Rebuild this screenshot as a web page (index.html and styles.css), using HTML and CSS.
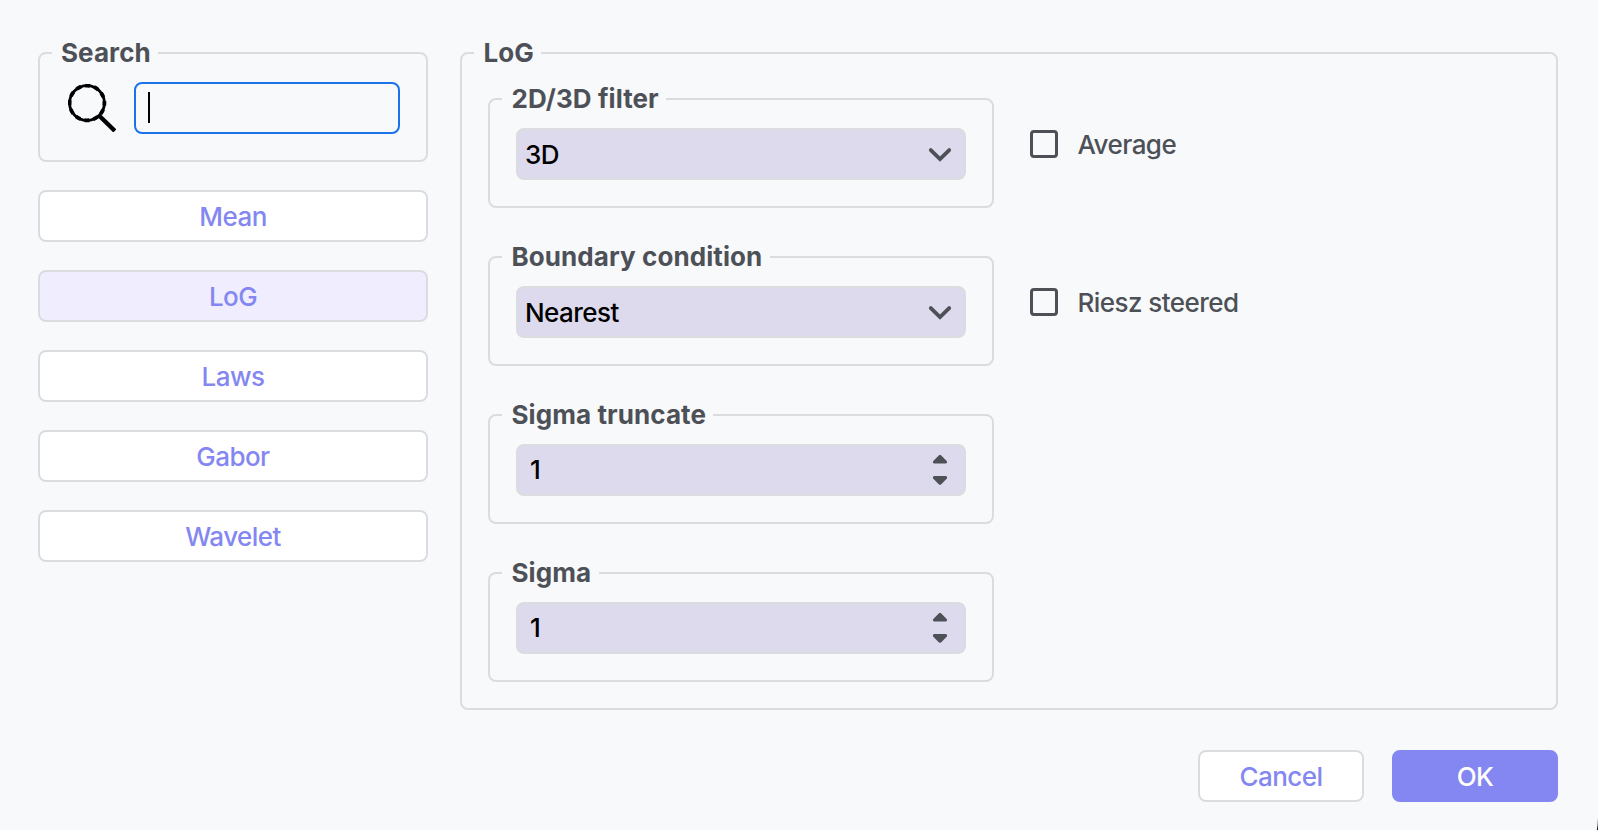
FILE: index.html
```html
<!DOCTYPE html>
<html lang="en">
<head>
<meta charset="utf-8">
<title>Filter settings</title>
<link rel="stylesheet" href="styles.css">
</head>
<body>
<div class="dialog">
  <div class="content">
    <aside class="sidebar">
      <fieldset class="group group-search">
        <legend class="legend">Search</legend>
        <div class="search-row">
          <svg class="search-icon" width="48" height="48" viewBox="0 0 48 48" fill="none" stroke="#000">
            <circle cx="19" cy="19" r="17.4" stroke-width="2.8"/>
            <circle cx="19" cy="19" r="17.4" stroke-width="3.8" stroke-dasharray="5 4.11" stroke-dashoffset="2.5"/>
            <path d="M31.5 32 46.8 46.900" stroke-width="4.3"/>
          </svg>
          <div class="search-input"><span class="caret"></span></div>
        </div>
      </fieldset>
      <button class="btn">Mean</button>
      <button class="btn btn-selected">LoG</button>
      <button class="btn">Laws</button>
      <button class="btn">Gabor</button>
      <button class="btn">Wavelet</button>
    </aside>
    <fieldset class="group panel">
      <legend class="legend">LoG</legend>
      <div class="options">
        <fieldset class="group">
          <legend class="legend">2D/3D filter</legend>
          <div class="field"><span>3D</span>
            <svg class="chevron" width="24" height="16" viewBox="0 0 24 16"><path d="M2.8 3.1 12 12.2 21.2 3.1" fill="none" stroke="#4d5157" stroke-width="3.8" stroke-linecap="round"/></svg>
          </div>
        </fieldset>
        <label class="check"><span class="box"></span>Average</label>
        <fieldset class="group">
          <legend class="legend">Boundary condition</legend>
          <div class="field"><span>Nearest</span>
            <svg class="chevron" width="24" height="16" viewBox="0 0 24 16"><path d="M2.8 3.1 12 12.2 21.2 3.1" fill="none" stroke="#4d5157" stroke-width="3.8" stroke-linecap="round"/></svg>
          </div>
        </fieldset>
        <label class="check"><span class="box"></span>Riesz steered</label>
        <fieldset class="group group-row">
          <legend class="legend">Sigma truncate</legend>
          <div class="field field-number"><span>1</span>
            <svg class="spinner" width="16" height="32" viewBox="0 0 16 32" fill="#4d5157"><path d="M7 1.2q1-.9 2 0l5.7 5.7q.6.8.3 1.7-.4 1-1.4 1H2.400q-1 0-1.400-1-.3-.9.3-1.700z"/><path d="M7 30.400q1 .9 2 0l5.700-5.700q.6-.8.3-1.700-.4-1-1.400-1H2.400q-1 0-1.400 1-.3.9.3 1.700z"/></svg>
          </div>
        </fieldset>
        <fieldset class="group group-row">
          <legend class="legend">Sigma</legend>
          <div class="field field-number"><span>1</span>
            <svg class="spinner" width="16" height="32" viewBox="0 0 16 32" fill="#4d5157"><path d="M7 1.2q1-.9 2 0l5.7 5.7q.6.8.3 1.7-.4 1-1.4 1H2.400q-1 0-1.400-1-.3-.9.3-1.700z"/><path d="M7 30.400q1 .9 2 0l5.700-5.700q.6-.8.3-1.700-.4-1-1.400-1H2.400q-1 0-1.400 1-.3.9.3 1.700z"/></svg>
          </div>
        </fieldset>
      </div>
    </fieldset>
  </div>
  <footer class="actions">
    <button class="btn btn-action">Cancel</button>
    <button class="btn btn-action btn-primary">OK</button>
  </footer>
  <svg class="corner" width="2" height="12" viewBox="0 0 2 12"><path d="M2 0V12H.8Q1.800 7 2 0z" fill="#16181b"/></svg>
</div>
</body>
</html>
```
FILE: styles.css
```css
* { box-sizing: border-box; }

body {
  margin: 0;
  background: #f8f9fb;
  color: #4d5157;
  font: 450 26px/32px Inter, "Liberation Sans", sans-serif;
  letter-spacing: -0.55px;
}

.dialog {
  position: relative;
  width: 1598px;
  height: 830px;
  padding: 37px 40px 28px 38px;
  display: flex;
  flex-direction: column;
  justify-content: space-between;
  overflow: hidden;
}

.content {
  display: flex;
  align-items: flex-start;
  gap: 32px;
}

.sidebar {
  width: 390px;
  display: flex;
  flex-direction: column;
  gap: 28px;
}

.group {
  margin: 0;
  min-width: 0;
  padding: 13px 26px 26px;
  border: 2px solid #dadce0;
  border-radius: 8px;
}

.legend {
  margin-left: -14px;
  padding: 0 7.5px 0 9.5px;
  font-weight: 700;
  letter-spacing: 0.08px;
}

.group-search { height: 125px; }

.group-search .legend { padding: 0 7.5px 0 9px; }

.search-row {
  display: flex;
  align-items: center;
  gap: 18px;
  padding-left: 2px;
}

.search-icon { flex: none; }

.search-input {
  flex: 1;
  height: 52px;
  padding: 8px 12px;
  border: 2px solid #1a73e8;
  border-radius: 8px;
}

.caret {
  display: block;
  width: 2px;
  height: 31px;
  background: #000;
}

.btn {
  height: 52px;
  padding: 2px 0 0;
  border: 2px solid #dadce0;
  border-radius: 8px;
  background: #fff;
  color: #8487f1;
  font: inherit;
  letter-spacing: inherit;
}

.btn-selected { background: #f0edff; }

.panel {
  flex: 1;
  padding-top: 14px;
}

.options {
  display: grid;
  grid-template-columns: 506px 1fr;
  column-gap: 36px;
  row-gap: 33px;
}

.group-row { grid-column: 1; }

.field {
  height: 52px;
  padding: 2px 12px 0 7px;
  border: 2px solid #dadce0;
  border-radius: 8px;
  background: #dcdaec;
  color: #000;
  display: flex;
  align-items: center;
  justify-content: space-between;
}

.field-number { padding: 0 16px 0 12px; }

.check {
  padding-top: 46px;
  display: flex;
  align-items: flex-start;
  gap: 19.5px;
}

.box {
  width: 28px;
  height: 28px;
  margin-top: 1px;
  border: 3px solid #4d5157;
  border-radius: 4px;
}

.actions {
  display: flex;
  justify-content: flex-end;
  gap: 28px;
}

.btn-action { width: 166px; }

.btn-primary {
  border-color: #8487f1;
  background: #8487f1;
  color: #fff;
}

.corner {
  position: absolute;
  right: 0;
  bottom: 0;
}
```
